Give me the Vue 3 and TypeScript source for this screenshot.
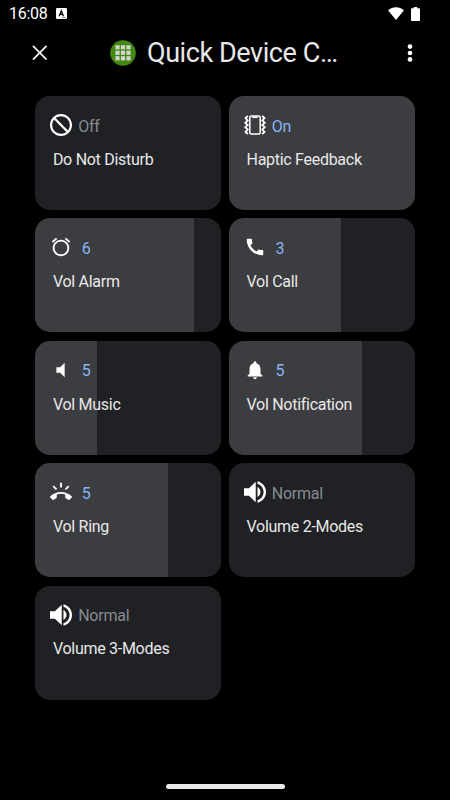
<script setup lang="ts">
type IconName = 'block' | 'haptic' | 'alarm' | 'call' | 'mute' | 'bell' | 'ring' | 'volume'

interface Control {
  label: string
  status: string
  icon: IconName
  fill: number
  tone: 'off' | 'on' | 'level'
}

const controls: Control[] = [
  { label: 'Do Not Disturb', status: 'Off', icon: 'block', fill: 0, tone: 'off' },
  { label: 'Haptic Feedback', status: 'On', icon: 'haptic', fill: 100, tone: 'on' },
  { label: 'Vol Alarm', status: '6', icon: 'alarm', fill: 85.7, tone: 'level' },
  { label: 'Vol Call', status: '3', icon: 'call', fill: 60, tone: 'level' },
  { label: 'Vol Music', status: '5', icon: 'mute', fill: 33.3, tone: 'level' },
  { label: 'Vol Notification', status: '5', icon: 'bell', fill: 71.4, tone: 'level' },
  { label: 'Vol Ring', status: '5', icon: 'ring', fill: 71.4, tone: 'level' },
  { label: 'Volume 2-Modes', status: 'Normal', icon: 'volume', fill: 0, tone: 'off' },
  { label: 'Volume 3-Modes', status: 'Normal', icon: 'volume', fill: 0, tone: 'off' },
]

const icons: Record<Exclude<IconName, 'haptic'>, { box: string; path: string }> = {
  block: {
    box: '2 2 20 20',
    path: 'M12 2C17.52 2 22 6.48 22 12s-4.48 10-10 10S2 17.520 2 12 6.480 2 12 2zM20 12c0-4.420-3.580-8-8-8-1.850 0-3.550.63-4.900 1.690L18.310 16.900C19.370 15.550 20 13.850 20 12zM12 20c1.850 0 3.550-.63 4.900-1.690L5.690 7.100C4.630 8.450 4 10.150 4 12c0 4.420 3.580 8 8 8z',
  },
  alarm: {
    box: '0 0 24 24',
    path: 'M22 5.72l-4.6-3.86-1.29 1.53 4.6 3.86L22 5.72zM7.88 3.39L6.6 1.86 2 5.71l1.29 1.53 4.59-3.85zM12 4c-4.97 0-9 4.03-9 9s4.02 9 9 9c4.97 0 9-4.03 9-9s-4.03-9-9-9zm0 16c-3.87 0-7-3.13-7-7s3.13-7 7-7 7 3.13 7 7-3.13 7-7 7z',
  },
  call: {
    box: '0 0 24 24',
    path: 'M20.01 15.38c-1.23 0-2.42-.2-3.53-.56-.35-.12-.74-.03-1.01.24l-1.57 1.97c-2.83-1.35-5.48-3.9-6.89-6.83l1.95-1.66c.27-.28.35-.67.24-1.02-.37-1.11-.56-2.3-.56-3.53 0-.54-.45-.99-.99-.99H4.19C3.65 3 3 3.24 3 3.99 3 13.28 10.73 21 20.01 21c.71 0 .99-.63.99-1.18v-3.45c0-.54-.45-.99-.99-.99z',
  },
  mute: { box: '0 0 24 24', path: 'M7 9v6h4l5 5V4l-5 5H7z' },
  bell: {
    box: '0 0 24 24',
    path: 'M12 22c1.1 0 2-.9 2-2h-4c0 1.1.89 2 2 2zm6-6v-5c0-3.07-1.64-5.64-4.5-6.32V4c0-.83-.67-1.5-1.5-1.5s-1.5.67-1.5 1.5v.68C7.63 5.36 6 7.92 6 11v5l-2 2v1h16v-1l-2-2z',
  },
  ring: {
    box: '0 0 24 24',
    path: 'M23.71 16.67C20.66 13.78 16.54 12 12 12 7.46 12 3.34 13.78.29 16.67c-.18.18-.29.43-.29.71s.11.53.29.71l2.48 2.48c.18.18.43.29.71.29.27 0 .52-.11.7-.28.79-.74 1.69-1.36 2.66-1.85.33-.16.56-.5.56-.9v-3.1c1.45-.48 3-.73 4.6-.73s3.15.25 4.6.72v3.1c0 .39.23.74.56.9.98.49 1.87 1.12 2.67 1.85.18.18.43.28.7.28.28 0 .53-.11.71-.29l2.48-2.48c.18-.18.29-.43.29-.71s-.12-.52-.3-.7zM21.16 6.26l-1.41-1.41-3.56 3.55 1.41 1.41s3.45-3.52 3.56-3.55zM13 2h-2v5h2V2zM6.4 9.81L7.81 8.4 4.26 4.84 2.84 6.26c.11.03 3.56 3.55 3.56 3.55z',
  },
  volume: {
    box: '3 3 18 18',
    path: 'M3 9v6h4l5.600 5.300V3.700L7 9H3zm13.500 3c0-1.770-1.020-3.290-2.500-4.030v8.050c1.480-.73 2.500-2.250 2.500-4.020zM14 3.230v2.060c2.890.86 5 3.540 5 6.710s-2.110 5.850-5 6.710v2.060c4.010-.91 7-4.490 7-8.770s-2.990-7.860-7-8.770z',
  },
}
</script>

<template>
  <div class="screen">
    <div class="statusbar">
      <span class="clock">16:08</span>
      <svg class="badge" viewBox="0 0 11 11">
        <rect width="11" height="11" rx="1.2" fill="#fff" />
        <path d="M3.2 8.2L5.3 2.8L7.4 8.2M4 6.4h2.7" fill="none" stroke="#000" stroke-width="1.3" />
        <path d="M6.4 9.6h1M8.3 9.6h1" stroke="#000" stroke-width=".9" />
      </svg>
      <svg class="wifi" viewBox="0 0 16 13">
        <path d="M0 3.2C4.6-.9 11.400-.9 16 3.200L8 13z" fill="#fff" />
      </svg>
      <svg class="battery" viewBox="0 0 9 14">
        <path d="M2.700 0h3.600v1.300H8c.6 0 1 .4 1 1V13c0 .6-.4 1-1 1H1c-.6 0-1-.4-1-1V2.300c0-.6.4-1 1-1h1.700z" fill="#fff" />
      </svg>
    </div>

    <header class="header">
      <svg class="close" viewBox="0 0 16 16">
        <path d="M1 1L15 15M15 1L1 15" stroke="#f1f1f1" stroke-width="1.900" />
      </svg>
      <svg class="logo" viewBox="0 0 26 26">
        <circle cx="13" cy="13" r="12.800" fill="#438812" />
        <g fill="#d3d6d0">
          <template v-for="r in 3" :key="r">
            <rect v-for="c in 3" :key="c" :x="5.4 + (c - 1) * 5.5" :y="5.2 + (r - 1) * 5.5" width="4.200" height="4.200" />
          </template>
        </g>
      </svg>
      <h1 class="title">Quick Device C…</h1>
      <svg class="more" viewBox="0 0 6 18">
        <circle cx="3" cy="2.600" r="2.350" fill="#fff" />
        <circle cx="3" cy="9" r="2.350" fill="#fff" />
        <circle cx="3" cy="15.400" r="2.350" fill="#fff" />
      </svg>
    </header>

    <main class="grid">
      <section
        v-for="item in controls"
        :key="item.label"
        class="card"
        :class="item.tone"
        :style="{ '--fill': item.fill + '%' }"
      >
        <div class="top">
          <svg v-if="item.icon === 'haptic'" class="icon" viewBox="0 0 22 22" fill="none" stroke="#fff">
            <rect x="5.800" y="1.900" width="10.400" height="18.200" rx="1.500" stroke-width="1.500" />
            <path d="M8.300 2.600h5.400v1.500H8.300z" fill="#fff" stroke="none" />
            <path d="M3.900 2L1.500 4.100L3.700 6.500L1.300 8.800L3.700 11L1.300 13.200L3.700 15.500L1.500 17.900L3.900 20" stroke-width="1.800" />
            <path d="M18.100 2L20.500 4.100L18.300 6.500L20.700 8.800L18.300 11L20.700 13.200L18.300 15.500L20.500 17.900L18.100 20" stroke-width="1.800" />
          </svg>
          <svg v-else class="icon" :viewBox="icons[item.icon].box">
            <path :d="icons[item.icon].path" fill="#fff" />
          </svg>
          <span class="status">{{ item.status }}</span>
        </div>
        <div class="label">{{ item.label }}</div>
      </section>
    </main>

    <div class="homebar"></div>
  </div>
</template>

<style>
body {
  background: #000;
}
</style>

<style scoped>
.screen {
  width: 450px;
  height: 800px;
  box-sizing: border-box;
  display: flex;
  flex-direction: column;
  overflow: hidden;
  background: #000;
  color: #e8e8e8;
  font-family: Roboto, "Liberation Sans", sans-serif;
}

.statusbar {
  height: 27px;
  display: flex;
  align-items: center;
  padding: 0 30px 0 9px;
}

.clock {
  width: 38px;
  padding-top: 1px;
  font-size: 16px;
  line-height: 28px;
  letter-spacing: -0.3px;
  color: #fff;
}

.badge {
  width: 11px;
  height: 11px;
  margin-left: 9px;
}

.wifi {
  width: 16px;
  height: 13px;
  margin-left: auto;
}

.battery {
  width: 9px;
  height: 14px;
  margin-left: 7px;
}

.header {
  height: 51px;
  display: flex;
  align-items: center;
  padding: 0 37px 0 32px;
}

.close {
  width: 15.500px;
  height: 15.500px;
}

.logo {
  width: 26px;
  height: 26px;
  margin-left: 62.500px;
}

.title {
  margin: 0 0 0 11px;
  padding-top: 2px;
  font-size: 27px;
  line-height: 49px;
  letter-spacing: -0.420px;
  font-weight: 400;
  white-space: nowrap;
}

.more {
  width: 6px;
  height: 18px;
  margin-left: auto;
}

.grid {
  display: grid;
  grid-template-columns: 185.500px 186px;
  grid-auto-rows: 114px;
  column-gap: 8.500px;
  row-gap: 8.470px;
  padding: 18px 35px 0;
}

.card {
  box-sizing: border-box;
  padding: 18px 15.400px 0;
  border-radius: 15px;
  background: linear-gradient(to right, #3c3d40 var(--fill), #202124 var(--fill));
}

.card:nth-child(even) {
  padding-left: 15px;
}

.top {
  height: 22px;
  display: flex;
  align-items: center;
}

.icon {
  width: 22px;
  height: 22px;
  flex: none;
}

.status {
  margin-left: 5.800px;
  padding-top: 3px;
  font-size: 16px;
  line-height: 22px;
  letter-spacing: -0.250px;
  color: #868b90;
}

.on .status,
.level .status {
  color: #8ab4f8;
}

.level .status {
  margin-left: 9.400px;
}

.label {
  margin: 12.600px 0 0 2.500px;
  font-size: 16px;
  line-height: 22px;
  letter-spacing: -0.280px;
  white-space: nowrap;
}

.homebar {
  width: 119px;
  height: 5px;
  margin: auto auto 11px 166px;
  border-radius: 3px;
  background: #e9e9e9;
}
</style>
